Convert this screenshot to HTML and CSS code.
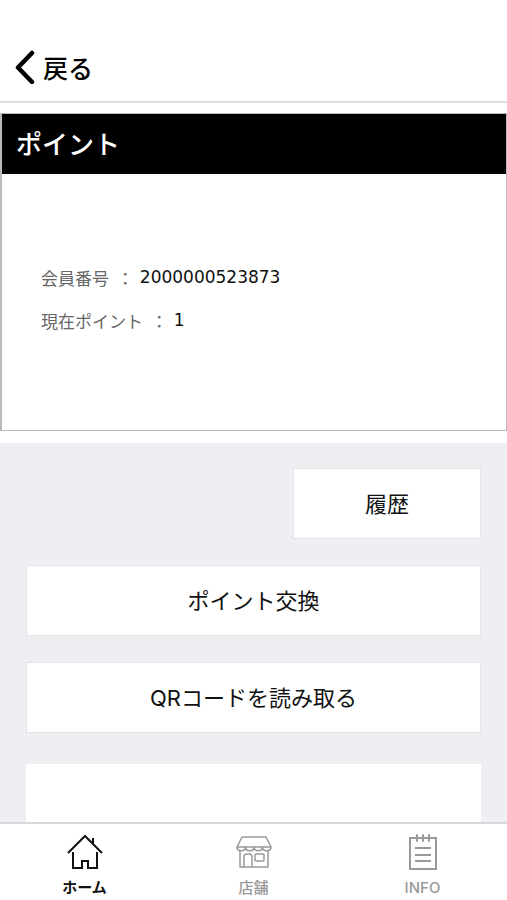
FILE: index.html
```html
<!DOCTYPE html>
<html lang="ja">
<head>
    <meta charset="UTF-8">
    <meta name="viewport" content="width=device-width, initial-scale=1.0">
    <title>ポイント</title>
    <link rel="stylesheet" href="styles.css">
</head>
<body>
<header>
    <a class="back" href="#">
        <svg width="22" height="34" viewBox="0 0 22 34" fill="none" stroke="#000" stroke-width="4.500" stroke-linecap="round" stroke-linejoin="round">
            <path d="M19 3L5 17.500L19 32"/>
        </svg>
        戻る
    </a>
</header>
<main>
    <section class="card">
        <h1>ポイント</h1>
        <dl class="member">
            <div>
                <dt>会員番号 <span>：</span></dt>
                <dd>2000000523873</dd>
            </div>
            <div>
                <dt>現在ポイント <span>：</span></dt>
                <dd>1</dd>
            </div>
        </dl>
    </section>
    <div class="actions">
        <button class="history" type="button">履歴</button>
        <button type="button">ポイント交換</button>
        <button type="button">QRコードを読み取る</button>
        <div class="panel"></div>
    </div>
</main>
<nav class="tabbar">
    <a class="active" href="#">
        <svg width="36" height="36" viewBox="0 0 36 36" fill="none" stroke="currentColor" stroke-width="2">
            <path d="M1 19L18 2L35 19M26 10V4"/>
            <path d="M6 18V34H15V27H21V34H30V18"/>
        </svg>
        ホーム
    </a>
    <a href="#">
        <svg width="36" height="36" viewBox="0 0 36 36" fill="none" stroke="currentColor" stroke-width="1.500" stroke-linejoin="round">
            <path d="M6 3H30L35 13H1Z"/>
            <path d="M1 13C1 18 9.500 18 9.500 13C9.500 18 18 18 18 13C18 18 26.500 18 26.500 13C26.500 18 35 18 35 13"/>
            <path d="M4 17V33H32V17"/>
            <path d="M8 33V23Q8 20 11 20H13Q16 20 16 23V33"/>
            <rect x="19" y="20" width="9" height="7" rx="1"/>
        </svg>
        店舗
    </a>
    <a href="#">
        <svg width="36" height="36" viewBox="0 0 36 36" fill="none" stroke="currentColor" stroke-width="2">
            <path d="M5 4H31V35H5Z"/>
            <path d="M12 1V7M18 1V7M24 1V7" stroke-linecap="round"/>
            <path d="M10 14H26M10 21H26M10 27H26"/>
        </svg>
        INFO
    </a>
</nav>
</body>
</html>
```
FILE: styles.css
```css
* {
    box-sizing: border-box;
}

body {
    margin: 0;
    height: 100vh;
    display: flex;
    flex-direction: column;
    background-color: #fff;
    color: #111;
    font-family: "Noto Sans CJK JP", sans-serif;
}

header {
    flex: none;
    padding: 43px 13px 11px;
    border-bottom: 2px solid #ddd;
}

.back {
    display: inline-flex;
    align-items: center;
    gap: 8px;
    height: 47px;
    color: #000;
    font-size: 25px;
    font-weight: 500;
    text-decoration: none;
}

main {
    flex: 1;
    min-height: 0;
    display: flex;
    flex-direction: column;
    padding-top: 10px;
    overflow: hidden;
}

.card {
    flex: none;
    min-height: 318px;
    margin-bottom: 12px;
    border: 1px solid #bbb;
    border-left-width: 2px;
}

.card h1 {
    margin: 0;
    padding: 0 14px 2px;
    background-color: #000;
    color: #fff;
    font-size: 26px;
    font-weight: 500;
    line-height: 58px;
}

.member {
    margin: 0;
    padding: 82px 39px 0;
    font-size: 17px;
    line-height: 43px;
}

.member div {
    display: flex;
    gap: 6px;
}

.member dt {
    color: #666;
}

.member dt span {
    margin-left: 4px;
}

.member dd {
    margin: 0;
    color: #111;
    font-family: "DejaVu Sans", sans-serif;
}

.actions {
    flex: 1;
    min-height: 0;
    display: flex;
    flex-direction: column;
    gap: 26px;
    padding: 25px 26px 0;
    background-color: #eeeef3;
}

.actions button {
    flex: none;
    height: 71px;
    padding: 0 0 4px;
    border: 1px solid #e4e4e7;
    background-color: #fff;
    color: #111;
    font-family: Inter, "Noto Sans CJK JP", sans-serif;
    font-size: 22px;
}

.actions .history {
    align-self: flex-end;
    width: 188px;
}

.panel {
    flex: 1;
    margin-top: 5px;
    background-color: #fff;
}

.tabbar {
    flex: none;
    display: grid;
    grid-template-columns: repeat(3, 1fr);
    height: 78px;
    border-top: 2px solid #d8d8d8;
}

.tabbar a {
    display: flex;
    flex-direction: column;
    align-items: center;
    gap: 6px;
    padding-top: 10px;
    color: #999;
    font-family: Inter, "Noto Sans CJK JP", sans-serif;
    font-size: 15px;
    font-weight: 500;
    line-height: 24px;
    text-decoration: none;
}

.tabbar .active {
    color: #111;
    font-weight: 700;
}
```
